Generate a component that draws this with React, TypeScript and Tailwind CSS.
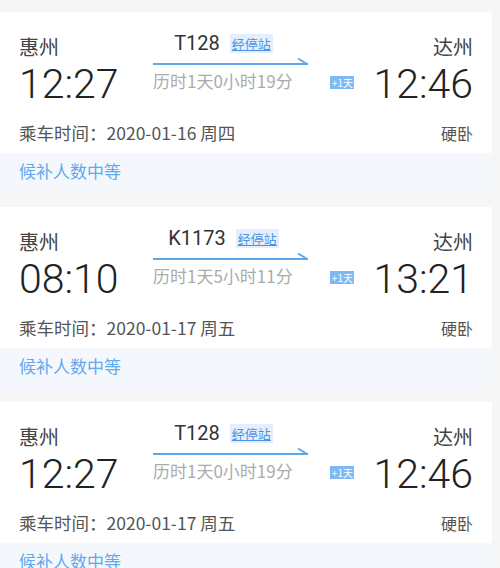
const trips = [
  { no: 'T128', from: '惠州', to: '达州', dep: '12:27', arr: '12:46', dur: '历时1天0小时19分', date: '2020-01-16 周四', seat: '硬卧' },
  { no: 'K1173', from: '惠州', to: '达州', dep: '08:10', arr: '13:21', dur: '历时1天5小时11分', date: '2020-01-17 周五', seat: '硬卧' },
  { no: 'T128', from: '惠州', to: '达州', dep: '12:27', arr: '12:46', dur: '历时1天0小时19分', date: '2020-01-17 周五', seat: '硬卧' },
];

function Arrow() {
  return (
    <svg width="155" height="16" viewBox="0 0 155 16" className="block">
      <line x1="0" y1="10" x2="155" y2="10" stroke="#5ea6ea" strokeWidth="2" />
      <line x1="154" y1="10" x2="145" y2="4.5" stroke="#5ea6ea" strokeWidth="2" />
    </svg>
  );
}

function TripCard({ trip }: { trip: (typeof trips)[number] }) {
  return (
    <div className="bg-white flex flex-col shrink-0">
      <div className="h-[141px] px-[19px] flex flex-col">
        <div className="flex">
          {/* departure */}
          <div className="w-[134px] pt-[22px] flex flex-col">
            <span className="text-[20px] leading-[26px] text-[#444]">{trip.from}</span>
            <span className="font-['Roboto','Noto_Sans_CJK_SC',sans-serif] font-light text-[41px] leading-[48px] text-[#222]">
              {trip.dep}
            </span>
          </div>

          {/* train no + duration */}
          <div className="w-[155px] pt-[20px] flex flex-col">
            <div className="h-[22px] flex items-center justify-center gap-[10px] pr-[14px]">
              <span className="text-[20px] leading-[22px] text-[#333] font-['Roboto','Noto_Sans_CJK_SC',sans-serif]">{trip.no}</span>
              <span className="bg-[#e3effc] px-[2px] text-[13px] leading-[19px] text-[#4a93e4] underline">经停站</span>
            </div>
            <Arrow />
            <span className="text-[17px] leading-[22px] text-[#ababab] whitespace-nowrap">{trip.dur}</span>
          </div>

          {/* arrival */}
          <div className="flex-1 pt-[22px] flex flex-col items-end">
            <span className="text-[20px] leading-[26px] text-[#444]">{trip.to}</span>
            <div className="flex items-center gap-[19px]">
              <span className="bg-[#7db9f2] text-white text-[10px] leading-[13px] w-[24px] text-center mb-[4px]">+1天</span>
              <span className="font-['Roboto','Noto_Sans_CJK_SC',sans-serif] font-light text-[41px] leading-[48px] text-[#222]">
                {trip.arr}
              </span>
            </div>
          </div>
        </div>

        <div className="mt-[14px] flex justify-between items-center text-[#555]">
          <span className="text-[17.5px] leading-[22px]">乘车时间：{trip.date}</span>
          <span className="text-[16px] leading-[22px]">{trip.seat}</span>
        </div>
      </div>

      <div className="h-[42px] bg-[#f4f8fd] px-[19px] flex items-center pb-[6px]">
        <span className="text-[17px] text-[#62a8ec]">候补人数中等</span>
      </div>
    </div>
  );
}

export default function App() {
  return (
    <div className="w-[500px] h-[568px] overflow-hidden bg-[#f6f6f6] pt-[12px] pr-[8px] flex flex-col gap-[12px] font-['Noto_Sans_CJK_SC',sans-serif]">
      {trips.map((trip, i) => (
        <TripCard key={i} trip={trip} />
      ))}
    </div>
  );
}
